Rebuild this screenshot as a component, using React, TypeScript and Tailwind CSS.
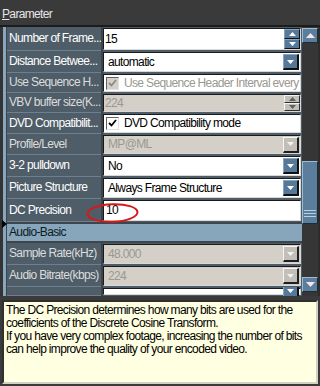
import React from "react";

type Kind =
  | { t: "spin"; v: string }
  | { t: "spinDis"; v: string }
  | { t: "combo"; v: string }
  | { t: "comboDis"; v: string }
  | { t: "check"; v: string }
  | { t: "checkDis"; v: string }
  | { t: "text"; v: string }
  | { t: "header" };

type Row = { label: string; h: string; dis?: boolean; kind: Kind };

const rows: Row[] = [
  { label: "Number of Frame...", h: "h-[24px]", kind: { t: "spin", v: "15" } },
  { label: "Distance Betwee...", h: "h-[22px]", kind: { t: "combo", v: "automatic" } },
  { label: "Use Sequence H...", h: "h-[20px]", dis: true, kind: { t: "checkDis", v: "Use Sequence Header Interval every" } },
  { label: "VBV buffer size(K...", h: "h-[20px]", dis: true, kind: { t: "spinDis", v: "224" } },
  { label: "DVD Compatibilit...", h: "h-[21px]", kind: { t: "check", v: "DVD Compatibility mode" } },
  { label: "Profile/Level", h: "h-[21px]", dis: true, kind: { t: "comboDis", v: "MP@ML" } },
  { label: "3-2 pulldown", h: "h-[22px]", kind: { t: "combo", v: "No" } },
  { label: "Picture Structure", h: "h-[22px]", kind: { t: "combo", v: "Always Frame Structure" } },
  { label: "DC Precision", h: "h-[23px]", kind: { t: "text", v: "10" } },
  { label: "Audio-Basic", h: "h-[21px]", kind: { t: "header" } },
  { label: "Sample Rate(kHz)", h: "h-[22px]", dis: true, kind: { t: "comboDis", v: "48.000" } },
  { label: "Audio Bitrate(kbps)", h: "h-[22px]", dis: true, kind: { t: "comboDis", v: "224" } },
  { label: "", h: "h-[9px]", kind: { t: "combo", v: "" } },
];

function Tri({ up, color }: { up?: boolean; color: string }) {
  return (
    <svg width="7" height="4" viewBox="0 0 7 4">
      {up ? <polygon points="0,4 7,4 3.5,0" fill={color} /> : <polygon points="0,0 7,0 3.5,4" fill={color} />}
    </svg>
  );
}

function DropBtn({ dis }: { dis?: boolean }) {
  return dis ? (
    <div className="w-[16px] h-[16px] shrink-0 flex items-center justify-center bg-[#c2bfb8] border-t border-l border-t-[#f4f4f4] border-l-[#f4f4f4] border-b-2 border-r-2 border-b-[#202020] border-r-[#202020]">
      <Tri color="#f2f2f2" />
    </div>
  ) : (
    <div className="w-[16px] h-[16px] shrink-0 flex items-center justify-center bg-[#56799a] border-t border-l border-t-[#86a6c0] border-l-[#86a6c0] border-b-2 border-r-2 border-b-[#101010] border-r-[#101010]">
      <Tri color="#ffffff" />
    </div>
  );
}

function SpinBtns({ dis }: { dis?: boolean }) {
  const cls = dis
    ? "bg-[#c2bfb8] border-t border-l border-t-[#f4f4f4] border-l-[#f4f4f4] border-b border-r border-b-[#303030] border-r-[#303030]"
    : "bg-[#56799a] border-t border-l border-t-[#86a6c0] border-l-[#86a6c0] border-b border-r border-b-[#101010] border-r-[#101010]";
  const c = dis ? "#606060" : "#ffffff";
  return (
    <div className="w-[16px] h-full shrink-0 flex flex-col">
      <div className={"flex-1 flex items-center justify-center " + cls}>
        <Tri up color={c} />
      </div>
      <div className={"flex-1 flex items-center justify-center " + cls}>
        <Tri color={c} />
      </div>
    </div>
  );
}

function CheckBox({ dis }: { dis?: boolean }) {
  return (
    <div
      className={
        "w-[13px] h-[13px] shrink-0 flex items-center justify-center border-t border-l border-t-[#606060] border-l-[#606060] border-b border-r border-b-[#e0e0e0] border-r-[#e0e0e0] " +
        (dis ? "bg-[#d4d0c8]" : "bg-white")
      }
    >
      <svg width="9" height="9" viewBox="0 0 9 9">
        <path d="M1 4 L3.5 6.5 L8 1" stroke={dis ? "#8a8a8a" : "#000"} strokeWidth="1.8" fill="none" />
      </svg>
    </div>
  );
}

function Value({ k }: { k: Kind }) {
  const box =
    "h-full flex items-center border-t border-l border-t-[#1a1a1a] border-l-[#1a1a1a] border-b border-r border-b-[#d8d8d8] border-r-[#d8d8d8]";
  switch (k.t) {
    case "spin":
      return (
        <div className={box + " bg-white pl-[1px]"}>
          <span className="flex-1 text-black">{k.v}</span>
          <SpinBtns />
        </div>
      );
    case "spinDis":
      return (
        <div className={box + " bg-[#d4d0c8] pl-[1px]"}>
          <span className="flex-1 text-[#9a9890]">{k.v}</span>
          <SpinBtns dis />
        </div>
      );
    case "combo":
      return (
        <div className={box + " bg-white pl-[4px] pr-[1px]"}>
          <span className="flex-1 text-black whitespace-nowrap">{k.v}</span>
          <DropBtn />
        </div>
      );
    case "comboDis":
      return (
        <div className={box + " bg-[#d4d0c8] pl-[4px] pr-[1px]"}>
          <span className="flex-1 text-[#9a9890]">{k.v}</span>
          <DropBtn dis />
        </div>
      );
    case "check":
      return (
        <div className={box + " bg-white pl-[2px] gap-[5px]"}>
          <CheckBox />
          <span className="text-black whitespace-nowrap">{k.v}</span>
        </div>
      );
    case "checkDis":
      return (
        <div className={box + " bg-white pl-[2px] gap-[5px] overflow-hidden"}>
          <CheckBox dis />
          <span className="text-[#9a9890] whitespace-nowrap">{k.v}</span>
        </div>
      );
    case "text":
      return (
        <div className={box + " bg-white pl-[2px]"}>
          <span className="text-black">{k.v}</span>
        </div>
      );
    default:
      return null;
  }
}

function RowView({ r }: { r: Row }) {
  if (r.kind.t === "header") {
    return (
      <div className={r.h + " flex flex-col"}>
        <div className="h-[2px] bg-[#3c464e]" />
        <div className="flex-1 bg-[#87a6bb] pl-[2px] flex items-center text-[#0e1a22]">{r.label}</div>
        <div className="h-[2px] bg-[#3c464e]" />
      </div>
    );
  }
  return (
    <div className={r.h + " flex shrink-0"}>
      <div
        className={
          "w-[94px] shrink-0 pl-[2px] flex items-center whitespace-nowrap overflow-hidden border-b border-b-[#6e808d] " +
          (r.dis ? "text-[#dcdcdc]" : "text-white")
        }
      >
        {r.label}
      </div>
      <div className="w-[2px] shrink-0 bg-[#3a454d]" />
      <div className="flex-1 min-w-0 py-[1px] pr-[1px] overflow-hidden">
        <Value k={r.kind} />
      </div>
    </div>
  );
}

function ScrollBtn({ up }: { up?: boolean }) {
  return (
    <div className="w-[16px] h-[15px] shrink-0 flex items-center justify-center bg-[#5a7e9c] border-t border-l border-t-[#9cbcd4] border-l-[#9cbcd4] border-b border-r border-b-[#1c2c38] border-r-[#1c2c38]">
      <svg width="9" height="5" viewBox="0 0 9 5">
        {up ? <polygon points="0,5 9,5 4.5,0" fill="#f6e4ea" /> : <polygon points="0,0 9,0 4.5,5" fill="#f6e4ea" />}
      </svg>
    </div>
  );
}

export default function App() {
  return (
    <div className="w-[320px] h-[386px] bg-[#3a3a3a] flex flex-col overflow-hidden relative font-['Liberation_Sans',Arial,sans-serif] text-[12px] leading-[13px] tracking-[-0.65px]">
      <div className="h-[25px] shrink-0 pl-[2px] pt-[8px] text-[#e6e6e6]">
        <span className="underline">P</span>arameter
      </div>
      <div className="h-[2px] shrink-0 bg-[#1c1c1c]" />
      <div className="h-[269px] shrink-0 flex">
        <div className="w-[3px] shrink-0 bg-[#343434]" />
        <div className="w-[4px] shrink-0 bg-[#88a7bd] relative border-r border-r-[#3a454d]">
          <svg className="absolute left-[-1px] top-[193px]" width="5" height="8" viewBox="0 0 5 8">
            <polygon points="0,0 5,4 0,8" fill="#000" />
          </svg>
        </div>
        <div className="w-[295px] shrink-0 flex flex-col bg-[#4e5d68] overflow-hidden">
          {rows.map((r, i) => (
            <RowView key={i} r={r} />
          ))}
        </div>
        <div className="w-[16px] shrink-0 flex flex-col bg-[#363636] pt-[1px]">
          <ScrollBtn up />
          <div className="h-[118px] shrink-0" />
          <div className="h-[63px] shrink-0 bg-[#5a7e9c] border-t border-l border-t-[#9cbcd4] border-l-[#9cbcd4] border-b border-r border-b-[#1c2c38] border-r-[#1c2c38] flex flex-col justify-end items-center pb-[6px] gap-[2px]">
            <div className="w-[12px] h-[1px] bg-[#b8d0e0]" />
            <div className="w-[12px] h-[1px] bg-[#b8d0e0]" />
            <div className="w-[12px] h-[1px] bg-[#b8d0e0]" />
          </div>
          <div className="h-[53px] shrink-0" />
          <ScrollBtn />
        </div>
        <div className="w-[2px] shrink-0 bg-[#2c2c2c]" />
      </div>
      <div className="h-[4px] shrink-0" />
      <div className="h-[84px] shrink-0 mx-[2px] bg-[#ffffe1] border-t-2 border-l-2 border-t-[#303030] border-l-[#303030] border-b-2 border-r-2 border-b-[#d4d0c8] border-r-[#d4d0c8] pl-[2px] pt-[2px] text-black whitespace-nowrap">
        The DC Precision determines how many bits are used for the
        <br />
        coefficients of the Discrete Cosine Transform.
        <br />
        If you have very complex footage, increasing the number of bits
        <br />
        can help improve the quality of your encoded video.
      </div>
      <svg className="absolute left-[86px] top-[202px]" width="54" height="22" viewBox="0 0 54 22">
        <ellipse cx="26.5" cy="11" rx="25" ry="8.8" fill="none" stroke="#d81818" strokeWidth="2" transform="rotate(-2 26.5 11)" />
      </svg>
    </div>
  );
}
